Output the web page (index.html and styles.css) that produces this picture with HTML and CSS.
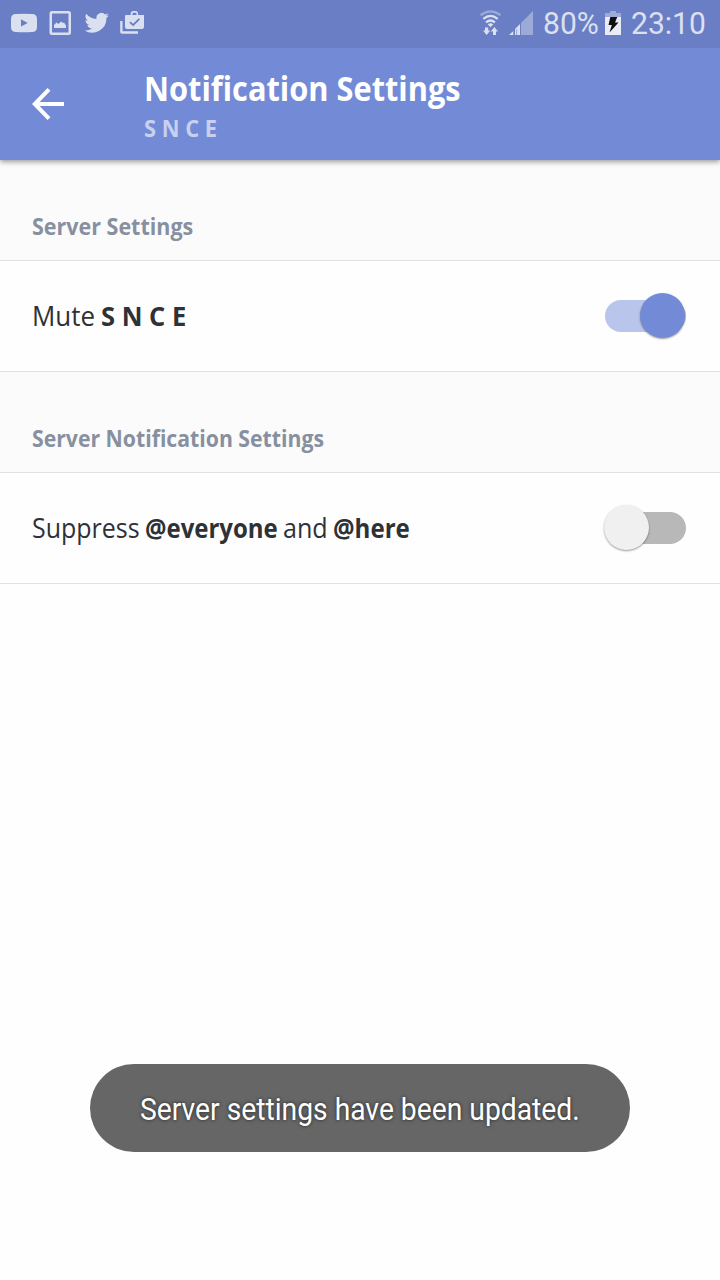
FILE: index.html
```html
<!DOCTYPE html>
<html lang="en">
<head>
<meta charset="utf-8">
<title>Notification Settings</title>
<link rel="stylesheet" href="styles.css">
</head>
<body>
<div class="status-bar">
  <svg class="status-icons" width="160" height="48" viewBox="0 0 160 48">
    <path class="icon" fill-rule="evenodd" d="M16 14Q24 13.4 32 14Q37 14 37 19V27Q37 32 32 32Q24 32.5 16 32Q11 32 11 27V19Q11 14 16 14ZM21 19.3V26.5L27.7 22.9Z"/>
    <path class="icon" fill-rule="evenodd" d="M52 11H68.500Q71 11 71 13.500V32.500Q71 35 68.500 35H52Q49.500 35 49.500 32.500V13.500Q49.500 11 52 11ZM52 13.500V32.500H68.500V13.500ZM54 28V25L56.500 22.500L58.500 24L61 21.500L63 23L64 22.500L66 25.500V28Z"/>
    <svg x="84.500" y="10.500" width="24.500" height="24.500" viewBox="0 0 24 24"><path class="icon" d="M24 4.600a10 10 0 0 1-2.800.8A5 5 0 0 0 23.300 2.700a10 10 0 0 1-3.100 1.200A4.900 4.900 0 0 0 11.800 8.400 14 14 0 0 1 1.700 3.200a4.900 4.900 0 0 0 1.500 6.600 5 5 0 0 1-2.200-.6 4.900 4.900 0 0 0 3.900 4.900 5 5 0 0 1-2.200.1 4.900 4.900 0 0 0 4.600 3.400A10 10 0 0 1 0 19.500a14 14 0 0 0 21.500-12.400A10 10 0 0 0 24 4.600Z"/></svg>
    <path class="icon" fill-rule="evenodd" d="M126 15H130.700V13.500Q130.700 11 133.500 11H135.500Q138 11 138 13.500V15H144V27Q144 29 142 29H127Q125 29 125 27V15.500ZM132.500 15H136.500V13.500Q136.500 12.700 135.700 12.700H133.300Q132.500 12.700 132.500 13.500ZM130.500 21.500L129.300 22.700L133.200 26.200L140 19.500L138.700 18.200L133.200 23.700Z"/>
    <path class="icon" d="M120.200 21H122.500V31.300H138V33.800H122Q120.200 33.800 120.200 32Z"/>
  </svg>
  <div class="status-right">
    <svg class="signal-icons" width="56" height="48" viewBox="480 0 56 48">
      <path class="arc dim" d="M480.500 15.200Q490.500 7.500 500.500 15.200"/>
      <path class="arc" d="M483.300 18.800Q490.500 13 497.700 18.800M486 22.300Q490.500 18.700 495 22.300"/>
      <path class="icon" d="M487.700 24.300Q490.500 22 493.300 24.300L490.500 27.200Z"/>
      <path class="icon" d="M485 27.500H488.200V30.500H490.300L486.600 35L483 30.500H485ZM493 35H496V31.500H498L494.400 27L490.800 31.500H493Z"/>
      <path class="icon dim" d="M533 11V35H521V23Z"/>
      <path class="icon" d="M509 35L513.300 31V35ZM515 35V29L520 24V35Z"/>
      <path class="gap" d="M516.300 29H517.200V35H516.300Z"/>
    </svg>
    <span class="status-text battery-level"><span class="fit">80%</span></span>
    <svg class="battery-icon" width="16" height="48" viewBox="605 0 16 48">
      <path class="icon dim" d="M610 11H616V13H621V17H605V13H610Z"/>
      <path class="cell" d="M605 17H621V35H605Z"/>
      <path class="bolt" d="M610.300 17H617.300L615 22.500H618.500L609.500 32.500L611.800 25H608.500Z"/>
    </svg>
    <span class="status-text clock"><span class="fit">23:10</span></span>
  </div>
</div>

<header class="app-bar">
  <svg class="back" width="32" height="34" viewBox="0 0 32 34"><path d="M17 2.300L2.800 17L17 31.700M3 17H32"/></svg>
  <div class="titles">
    <h1 class="title"><span class="fit">Notification Settings</span></h1>
    <div class="subtitle"><span class="fit">S N C E</span></div>
  </div>
</header>

<main>
  <h2 class="section"><span class="fit section-server">Server Settings</span></h2>
  <div class="row">
    <div class="label"><span class="fit word-mute">Mute</span><b class="fit word-snce">S N C E</b></div>
    <div class="switch on"><div class="track"></div><div class="thumb"></div></div>
  </div>
  <h2 class="section"><span class="fit section-notify">Server Notification Settings</span></h2>
  <div class="row">
    <div class="label"><span class="fit word-suppress">Suppress</span><b class="fit word-everyone">@everyone</b><span class="fit word-and">and</span><b class="fit word-here">@here</b></div>
    <div class="switch off"><div class="track"></div><div class="thumb"></div></div>
  </div>
</main>

<div class="toast"><span class="fit">Server settings have been updated.</span></div>
</body>
</html>
```
FILE: styles.css
```css
* { box-sizing: border-box; }
body {
  margin: 0;
  width: 720px;
  height: 1280px;
  overflow: hidden;
  position: relative;
  background: #fefefe;
  color: #2e3136;
  font-family: "Open Sans", "Noto Sans", sans-serif;
}
svg { display: block; flex: none; }
.fit { display: inline-block; white-space: pre; transform-origin: left center; }

.status-bar {
  position: relative;
  z-index: 1;
  height: 48px;
  display: flex;
  justify-content: space-between;
  background: #697ec4;
}
.icon { fill: #dbe0f1; }
.dim { opacity: .45; }
.arc { fill: none; stroke: #dbe0f1; stroke-width: 2.2; }
.gap { fill: #8f9dd2; }
.cell { fill: #e9ecf7; }
.bolt { fill: #111; }
.status-right { display: flex; width: 240px; }
.status-text {
  font: 30.5px/47px Roboto, sans-serif;
  color: #dbe0f1;
}
.status-text .fit { transform: scaleX(.985); }
.battery-level { width: 62px; padding-left: 7px; }
.battery-icon { margin-left: 7px; }
.clock { padding-left: 10px; }

.app-bar {
  position: relative;
  height: 112px;
  padding-left: 32px;
  display: flex;
  background: #738bd7;
  box-shadow: 0 2px 5px rgba(0, 0, 0, .38);
}
.back { margin-top: 39px; fill: none; stroke: #fff; stroke-width: 4; }
.titles { margin-left: 80px; padding-top: 16px; }
.title {
  margin: 0;
  font-size: 34px;
  font-weight: 700;
  line-height: 48px;
  color: #fff;
}
.title .fit { transform: scaleX(.905); }
.subtitle {
  font-size: 23px;
  font-weight: 700;
  line-height: 32px;
  color: #c7d1ef;
}
.subtitle .fit { transform: scaleX(.95); }

.section {
  margin: 0;
  height: 101px;
  padding: 51px 32px 0;
  border-bottom: 1px solid #e1e1e1;
  background: #fbfbfb;
  color: #8790a0;
  font-size: 22.5px;
  font-weight: 700;
  line-height: 32px;
}
.section-server { transform: scaleX(.955); }
.section-notify { transform: scaleX(.943); }
.row {
  height: 111px;
  padding: 0 34px 0 32px;
  display: flex;
  justify-content: space-between;
  align-items: center;
  border-bottom: 1px solid #e1e1e1;
  background: #fefefe;
}
.label { display: flex; font-size: 27px; line-height: 36px; }
.word-mute { width: 68.5px; transform: scaleX(.96); }
.word-snce { transform: scaleX(.945); }
.word-suppress { width: 113px; transform: scaleX(.925); }
.word-everyone { width: 138px; transform: scaleX(.888); }
.word-and { width: 49.500px; transform: scaleX(.93); }
.word-here { transform: scaleX(.892); }

.switch { position: relative; width: 82px; height: 46px; }
.track {
  position: absolute;
  inset: 7px .5px;
  border-radius: 16px;
}
.thumb {
  position: absolute;
  top: 0;
  width: 45px;
  height: 45px;
  border-radius: 50%;
  box-shadow: 0 1px 2px rgba(0, 0, 0, .4);
}
.on .track { background: #b9c5eb; }
.on .thumb { right: 1px; background: #738bd7; }
.off .track { background: #b8b8b8; }
.off .thumb { left: .4px; background: #f0f0f0; }

.toast {
  position: absolute;
  left: 90px;
  top: 1064px;
  width: 540px;
  height: 88px;
  padding-left: 50px;
  border-radius: 44px;
  background: #666;
  color: #fff;
  font: 32px/91px Roboto, sans-serif;
  text-shadow: 0 0 4px rgba(0, 0, 0, .7);
}
.toast .fit { transform: scaleX(.883); }
```
